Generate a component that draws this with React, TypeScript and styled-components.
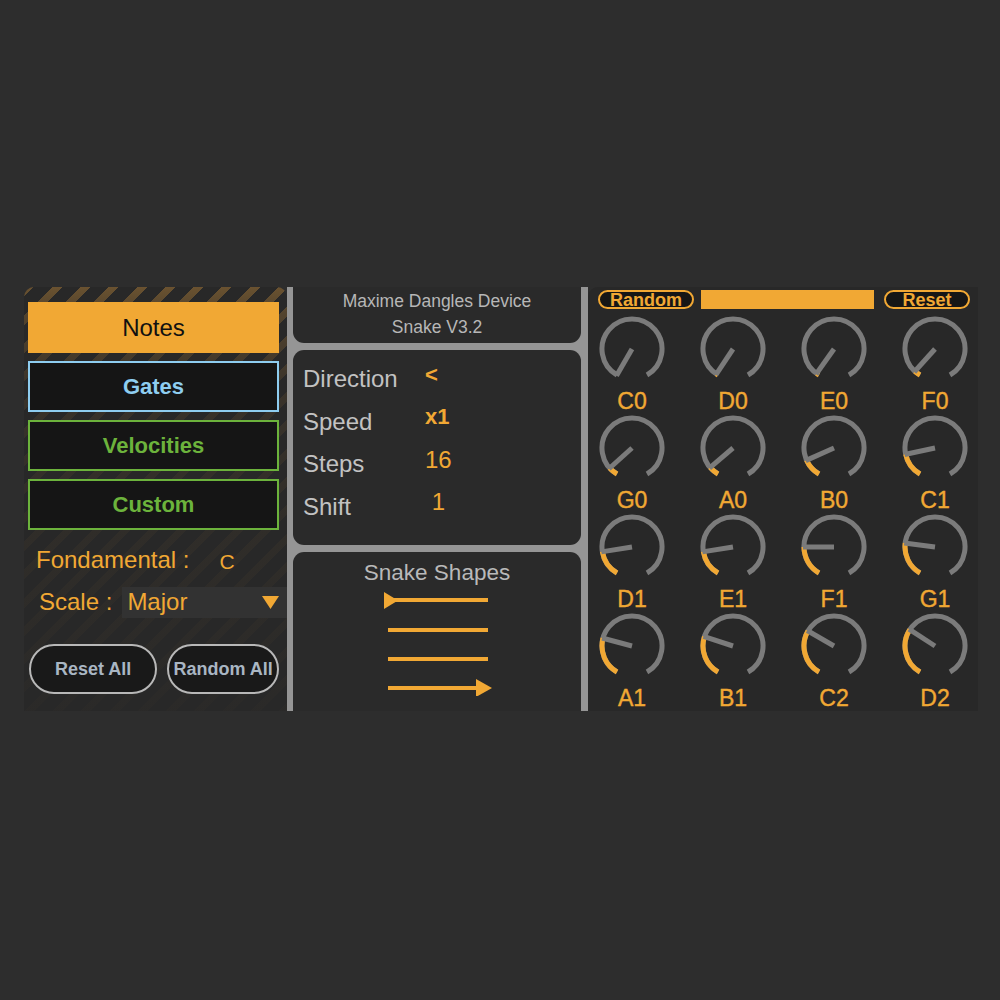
import React from "react";
import styled, { createGlobalStyle } from "styled-components";

const ORANGE = "#f1a834";
const KNOB_GRAY = "#7b7b7b";

const GlobalStyle = createGlobalStyle`
  html, body {
    margin: 0;
    padding: 0;
    background: #2d2d2d;
    font-family: "Liberation Sans", Arial, sans-serif;
  }
`;

const Page = styled.div`
  width: 1000px;
  height: 1000px;
  padding-top: 287px;
  box-sizing: border-box;
`;

const Device = styled.div`
  margin-left: 24px;
  width: 954px;
  height: 424px;
  display: flex;
`;

/* ---------- left column ---------- */

const LeftPanel = styled.div`
  width: 263px;
  background-color: #282828;
  background-image: linear-gradient(
      to bottom,
      rgba(40, 40, 40, 0) 0%,
      rgba(40, 40, 40, 0.35) 6%,
      rgba(40, 40, 40, 0.75) 25%,
      rgba(40, 40, 40, 0.88) 55%,
      rgba(40, 40, 40, 0.96) 100%
    ),
    repeating-linear-gradient(
      135deg,
      #6a5230 0px,
      #6a5230 7px,
      #282828 7px,
      #282828 20px
    );
  border-radius: 10px 10px 0 0;
  padding: 15px 8px 0 4px;
  box-sizing: border-box;
  display: flex;
  flex-direction: column;
`;

const ModeButton = styled.div<{ $fill?: string; $border: string; $color: string; $bold?: boolean }>`
  height: 51px;
  box-sizing: border-box;
  background: ${(p) => p.$fill || "#151515"};
  border: 2px solid ${(p) => p.$border};
  color: ${(p) => p.$color};
  font-size: ${(p) => (p.$bold ? "22px" : "24px")};
  font-weight: ${(p) => (p.$bold ? 700 : 400)};
  display: flex;
  align-items: center;
  justify-content: center;
  margin-bottom: 8px;
`;

const FieldRow = styled.div<{ $indent: number }>`
  display: flex;
  align-items: center;
  padding-left: ${(p) => p.$indent}px;
  color: ${ORANGE};
  font-size: 24px;
  height: 32px;
`;

const Fondamental = styled(FieldRow)`
  margin-top: 6px;
`;

const NoteValue = styled.span`
  font-size: 21px;
  margin-left: 30px;
  margin-top: 3px;
`;

const ScaleRow = styled(FieldRow)`
  margin-top: 10px;
`;

const Dropdown = styled.div`
  margin-left: 10px;
  flex: 1;
  margin-right: -8px;
  height: 31px;
  background: #323232;
  display: flex;
  align-items: center;
  justify-content: space-between;
  padding: 0 8px 0 5px;
  box-sizing: border-box;
  svg {
    display: block;
  }
`;

const ActionRow = styled.div`
  display: flex;
  gap: 10px;
  margin-top: 26px;
  padding-left: 1px;
`;

const PillButton = styled.div<{ $w: number }>`
  width: ${(p) => p.$w}px;
  height: 50px;
  box-sizing: border-box;
  border: 2px solid #b8b8b8;
  border-radius: 25px;
  background: #191919;
  color: #a9b6c3;
  font-weight: 700;
  font-size: 18px;
  display: flex;
  align-items: center;
  justify-content: center;
`;

/* ---------- middle column ---------- */

const MiddleColumn = styled.div`
  width: 301px;
  background: #959595;
  padding: 0 7px 0 6px;
  box-sizing: border-box;
  display: flex;
  flex-direction: column;
  gap: 7px;
`;

const Box = styled.div<{ $h: number }>`
  height: ${(p) => p.$h}px;
  background: #2a2a2a;
  border-radius: 11px;
  box-sizing: border-box;
  flex-shrink: 0;
`;

const HeaderBox = styled(Box)`
  padding-top: 1px;
  text-align: center;
  color: #b7b7b7;
  font-size: 17.5px;
  line-height: 26px;
  border-radius: 0 0 11px 11px;
`;

const ParamsBox = styled(Box)`
  padding: 8px 0 0 10px;
`;

const ParamRow = styled.div`
  display: flex;
  align-items: center;
  height: 42.5px;
`;

const ParamLabel = styled.span`
  width: 122px;
  color: #c2c2c2;
  font-size: 24px;
`;

const ParamValue = styled.span<{ $bold?: boolean }>`
  color: ${ORANGE};
  font-size: ${(p) => (p.$bold ? "22px" : "24px")};
  font-weight: ${(p) => (p.$bold ? 700 : 400)};
  margin-top: -9px;
`;

const ShapesBox = styled(Box)`
  border-radius: 11px 11px 0 0;
  display: flex;
  flex-direction: column;
  align-items: center;
  padding-top: 8px;
`;

const ShapesTitle = styled.div`
  color: #b9b9b9;
  font-size: 22.5px;
  margin-bottom: 6px;
`;

/* ---------- right column ---------- */

const RightPanel = styled.div`
  flex: 1;
  background: #282828;
  border-radius: 10px 0 0 0;
  padding: 3px 0 0 4px;
  box-sizing: border-box;
`;

const TopBar = styled.div`
  display: flex;
  align-items: center;
  height: 19px;
  padding-left: 6px;
`;

const OrangePill = styled.div<{ $w: number }>`
  width: ${(p) => p.$w}px;
  height: 19px;
  box-sizing: border-box;
  border: 2px solid ${ORANGE};
  border-radius: 10px;
  background: #161616;
  color: ${ORANGE};
  font-weight: 700;
  font-size: 18px;
  line-height: 16px;
  text-align: center;
  overflow: visible;
  text-decoration: underline;
  text-underline-offset: 1px;
`;

const OrangeBar = styled.div`
  width: 173px;
  height: 19px;
  background: ${ORANGE};
  margin: 0 10px 0 7px;
`;

const KnobGrid = styled.div`
  display: grid;
  grid-template-columns: repeat(4, 80px);
  column-gap: 21px;
  margin-top: 7px;
`;

const KnobCell = styled.div`
  height: 99px;
  display: flex;
  flex-direction: column;
  align-items: center;
  svg {
    display: block;
  }
`;

const KnobLabel = styled.div`
  margin-top: 6px;
  color: ${ORANGE};
  font-size: 23px;
  line-height: 26px;
  -webkit-text-stroke: 0.4px ${ORANGE};
`;

const polar = (cx: number, cy: number, r: number, deg: number) => {
  const a = ((deg - 90) * Math.PI) / 180;
  return [cx + r * Math.cos(a), cy + r * Math.sin(a)];
};

const arc = (cx: number, cy: number, r: number, from: number, to: number) => {
  const [x1, y1] = polar(cx, cy, r, from);
  const [x2, y2] = polar(cx, cy, r, to);
  const large = to - from > 180 ? 1 : 0;
  return `M ${x1} ${y1} A ${r} ${r} 0 ${large} 1 ${x2} ${y2}`;
};

function Knob({ value, label }: { value: number; label: string }) {
  const start = -150;
  const end = 150;
  const ang = start + (end - start) * value;
  const [nx, ny] = polar(33, 33, 31, ang);
  return (
    <KnobCell>
      <svg width="66" height="66" viewBox="0 0 66 66">
        <path d={arc(33, 33, 30, start, end)} fill="none" stroke={KNOB_GRAY} strokeWidth="5" />
        {value > 0.005 && (
          <path d={arc(33, 33, 30, start, ang)} fill="none" stroke={ORANGE} strokeWidth="5" />
        )}
        <line x1="33" y1="33" x2={nx} y2={ny} stroke={KNOB_GRAY} strokeWidth="5" />
      </svg>
      <KnobLabel>{label}</KnobLabel>
    </KnobCell>
  );
}

const knobs: [string, number][] = [
  ["C0", 0.0],
  ["D0", 0.012],
  ["E0", 0.018],
  ["F0", 0.04],
  ["G0", 0.06],
  ["A0", 0.065],
  ["B0", 0.12],
  ["C1", 0.16],
  ["D1", 0.17],
  ["E1", 0.17],
  ["F1", 0.2],
  ["G1", 0.225],
  ["A1", 0.25],
  ["B1", 0.26],
  ["C2", 0.3],
  ["D2", 0.31],
];

function SnakeShapes() {
  return (
    <svg width="110" height="104" viewBox="0 0 110 104">
      <line x1="6" y1="8" x2="106" y2="8" stroke={ORANGE} strokeWidth="4" />
      <polygon points="2,0 2,17 16,8.5" fill={ORANGE} />
      <line x1="6" y1="38" x2="106" y2="38" stroke={ORANGE} strokeWidth="4" />
      <line x1="6" y1="67" x2="106" y2="67" stroke={ORANGE} strokeWidth="4" />
      <line x1="6" y1="96" x2="98" y2="96" stroke={ORANGE} strokeWidth="4" />
      <polygon points="94,87 94,105 110,96" fill={ORANGE} />
    </svg>
  );
}

export default function App() {
  return (
    <Page>
      <GlobalStyle />
      <Device>
        <LeftPanel>
          <ModeButton $fill={ORANGE} $border={ORANGE} $color="#111">
            Notes
          </ModeButton>
          <ModeButton $border="#8ecdf0" $color="#8ecdf0" $bold>
            Gates
          </ModeButton>
          <ModeButton $border="#6cb33c" $color="#6cb33c" $bold>
            Velocities
          </ModeButton>
          <ModeButton $border="#6cb33c" $color="#6cb33c" $bold>
            Custom
          </ModeButton>
          <Fondamental $indent={8}>
            Fondamental :<NoteValue>C</NoteValue>
          </Fondamental>
          <ScaleRow $indent={11}>
            Scale :
            <Dropdown>
              <span>Major</span>
              <svg width="17" height="13" viewBox="0 0 17 13">
                <polygon points="0,0 17,0 8.5,13" fill={ORANGE} />
              </svg>
            </Dropdown>
          </ScaleRow>
          <ActionRow>
            <PillButton $w={130}>Reset All</PillButton>
            <PillButton $w={113}>Random All</PillButton>
          </ActionRow>
        </LeftPanel>

        <MiddleColumn>
          <HeaderBox $h={56}>
            Maxime Dangles Device
            <br />
            Snake V3.2
          </HeaderBox>
          <ParamsBox $h={195}>
            <ParamRow>
              <ParamLabel>Direction</ParamLabel>
              <ParamValue $bold>&lt;</ParamValue>
            </ParamRow>
            <ParamRow>
              <ParamLabel>Speed</ParamLabel>
              <ParamValue $bold>x1</ParamValue>
            </ParamRow>
            <ParamRow>
              <ParamLabel>Steps</ParamLabel>
              <ParamValue>16</ParamValue>
            </ParamRow>
            <ParamRow>
              <ParamLabel>Shift</ParamLabel>
              <ParamValue>&nbsp;1</ParamValue>
            </ParamRow>
          </ParamsBox>
          <ShapesBox $h={159}>
            <ShapesTitle>Snake Shapes</ShapesTitle>
            <SnakeShapes />
          </ShapesBox>
        </MiddleColumn>

        <RightPanel>
          <TopBar>
            <OrangePill $w={96}>Random</OrangePill>
            <OrangeBar />
            <OrangePill $w={86}>Reset</OrangePill>
          </TopBar>
          <KnobGrid>
            {knobs.map(([label, v]) => (
              <Knob key={label} label={label} value={v} />
            ))}
          </KnobGrid>
        </RightPanel>
      </Device>
    </Page>
  );
}
